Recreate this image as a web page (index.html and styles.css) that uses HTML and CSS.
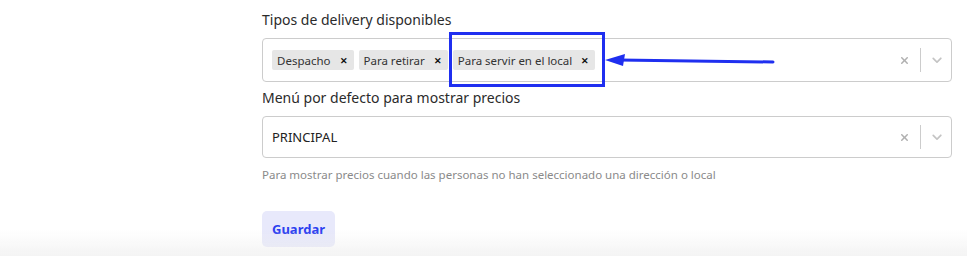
FILE: index.html
```html
<!DOCTYPE html>
<html lang="es">
<head>
    <meta charset="UTF-8">
    <title>Configuración</title>
    <link rel="stylesheet" href="styles.css">
</head>
<body>
    <div class="page">
        <form class="settings-form">
            <div class="field">
                <label class="field-label">Tipos de delivery disponibles</label>
                <div class="select multi">
                    <div class="select-values">
                        <span class="tag">Despacho <span class="tag-remove">&#x2715;</span></span>
                        <span class="tag">Para retirar <span class="tag-remove">&#x2715;</span></span>
                        <span class="tag highlighted">Para servir en el local <span class="tag-remove">&#x2715;</span>
                            <span class="annotation-box"></span>
                            <svg class="annotation-arrow" width="175" height="14" viewBox="0 0 175 14">
                                <line x1="18" y1="6" x2="172" y2="8" stroke="#1f2ff0" stroke-width="3" stroke-linecap="round"/>
                                <polygon points="4,6 24,0 22,12" fill="#1f2ff0"/>
                            </svg>
                        </span>
                    </div>
                    <div class="select-indicators">
                        <svg class="clear-icon" width="15" height="15" viewBox="0 0 20 20"><path d="M14.35 14.35a1 1 0 0 1-1.41 0L10 11.41l-2.94 2.94a1 1 0 1 1-1.41-1.41L8.59 10 5.65 7.06a1 1 0 1 1 1.41-1.41L10 8.59l2.94-2.94a1 1 0 1 1 1.41 1.41L11.41 10l2.94 2.94a1 1 0 0 1 0 1.41z" fill="#b0b0b0"/></svg>
                        <span class="separator"></span>
                        <svg class="chevron" width="16" height="16" viewBox="0 0 20 20"><path d="M4.52 7.15a1.07 1.07 0 0 1 1.51 0L10 11.12l3.97-3.97a1.07 1.07 0 1 1 1.51 1.51l-4.72 4.72a1.07 1.07 0 0 1-1.52 0L4.52 8.66a1.07 1.07 0 0 1 0-1.51z" fill="#c4c4c4"/></svg>
                    </div>
                </div>
            </div>

            <div class="field">
                <label class="field-label">Menú por defecto para mostrar precios</label>
                <div class="select">
                    <div class="select-values single">PRINCIPAL</div>
                    <div class="select-indicators">
                        <svg class="clear-icon" width="15" height="15" viewBox="0 0 20 20"><path d="M14.35 14.35a1 1 0 0 1-1.41 0L10 11.41l-2.94 2.94a1 1 0 1 1-1.41-1.41L8.59 10 5.65 7.06a1 1 0 1 1 1.41-1.41L10 8.59l2.94-2.94a1 1 0 1 1 1.41 1.41L11.41 10l2.94 2.94a1 1 0 0 1 0 1.41z" fill="#b0b0b0"/></svg>
                        <span class="separator"></span>
                        <svg class="chevron" width="16" height="16" viewBox="0 0 20 20"><path d="M4.52 7.15a1.07 1.07 0 0 1 1.51 0L10 11.12l3.97-3.97a1.07 1.07 0 1 1 1.51 1.51l-4.72 4.72a1.07 1.07 0 0 1-1.52 0L4.52 8.66a1.07 1.07 0 0 1 0-1.51z" fill="#c4c4c4"/></svg>
                    </div>
                </div>
                <div class="field-help">Para mostrar precios cuando las personas no han seleccionado una dirección o local</div>
            </div>

            <button type="button" class="save-button">Guardar</button>
        </form>
    </div>
    <div class="bottom-fade"></div>
</body>
</html>
```

FILE: styles.css
```css
body {
    margin: 0;
    font-family: 'Noto Sans', sans-serif;
    color: #2b2b2b;
    background: white;
    overflow: hidden;
}

.page {
    padding: 11px 15px 0 262px;
}

.settings-form {
    width: 690px;
}

.field {
    margin-bottom: 7px;
}

.field-label {
    display: block;
    font-size: 14px;
    line-height: 18px;
    margin-bottom: 9px;
}

.select {
    display: flex;
    align-items: center;
    height: 42px;
    border: 1px solid #cccccc;
    border-radius: 4px;
    box-sizing: border-box;
}

.select.multi {
    height: 44px;
}

.select-values {
    flex: 1;
    display: flex;
    align-items: center;
    gap: 5px;
    padding: 0 9px;
}

.select-values.single {
    font-size: 13px;
    color: #222;
}

.tag {
    position: relative;
    display: flex;
    align-items: center;
    height: 20px;
    padding: 0 6px 0 5px;
    background: #e6e6e6;
    border-radius: 2px;
    font-size: 11.5px;
    color: #333;
}

.tag-remove {
    font-size: 9px;
    font-weight: bold;
    margin-left: 9px;
    color: #111;
}

.annotation-box {
    position: absolute;
    left: -4px;
    top: -18px;
    width: 150px;
    height: 49px;
    border: 3px solid #1f2ff0;
}

.annotation-arrow {
    position: absolute;
    left: 148px;
    top: 4px;
}

.select-indicators {
    display: flex;
    align-items: center;
    height: 100%;
    padding-right: 6px;
}

.clear-icon {
    margin-right: 8px;
}

.separator {
    width: 1px;
    height: 24px;
    background: #cccccc;
    margin-right: 8px;
}

.field-help {
    font-size: 11.5px;
    color: #8a8a8a;
    margin-top: 9px;
}

.save-button {
    margin-top: 22px;
    height: 36px;
    padding: 0 10px;
    border: none;
    border-radius: 5px;
    background: #e8e9fb;
    color: #2c3ff0;
    font-family: 'Noto Sans', sans-serif;
    font-size: 13px;
    font-weight: bold;
}

.bottom-fade {
    position: fixed;
    left: 0;
    right: 0;
    bottom: 0;
    height: 26px;
    background: linear-gradient(to bottom, rgba(240, 240, 240, 0), rgba(236, 236, 236, 0.6));
    pointer-events: none;
}
```
